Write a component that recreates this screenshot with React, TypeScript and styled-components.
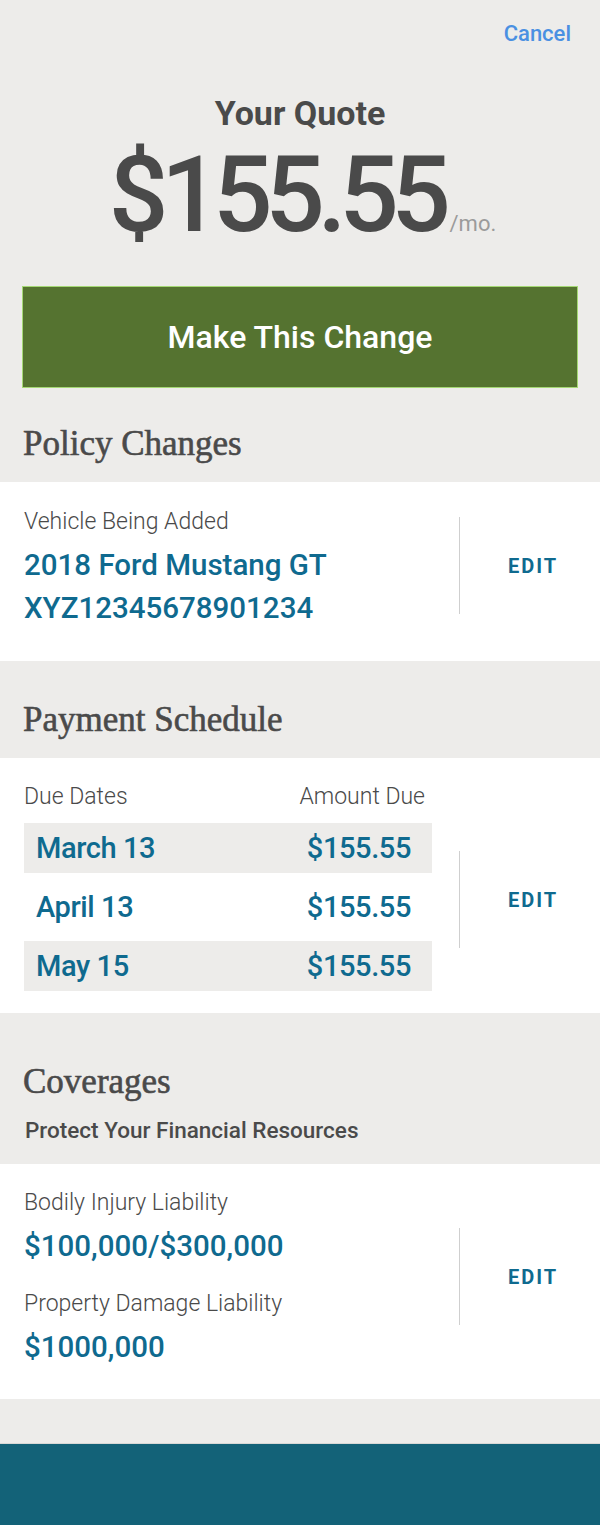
import React from "react";
import styled, { createGlobalStyle } from "styled-components";

const GlobalStyle = createGlobalStyle`
  html, body { margin: 0; padding: 0; background: #edecea; }
  body { font-family: Roboto, "Liberation Sans", sans-serif; color: #4a4a4a; }
  *, *::before, *::after { box-sizing: border-box; }
`;

const TEAL = "#0f6a8f";

const Page = styled.div`
  width: 600px;
  min-height: 1525px;
  display: flex;
  flex-direction: column;
  background: #edecea;
`;

const Header = styled.header`
  display: flex;
  flex-direction: column;
  align-items: center;
  padding: 21px 22px 0;
`;

const CancelLink = styled.a`
  align-self: flex-end;
  margin-right: 7px;
  font-size: 22px;
  line-height: 26px;
  font-weight: 500;
  color: #4a90e2;
  text-decoration: none;
  cursor: pointer;
`;

const Title = styled.h1`
  margin: 46px 0 0;
  font-size: 34px;
  line-height: 40px;
  font-weight: 700;
  color: #4a4a4a;
`;

const PriceRow = styled.div`
  margin-top: 8px;
  padding-left: 5px;
  display: flex;
  align-items: baseline;
  justify-content: center;
  line-height: 110px;
`;

const PriceAmount = styled.span`
  font-size: 105px;
  font-weight: 500;
  letter-spacing: -7.5px;
  color: #4a4a4a;
`;

const PerMonth = styled.span`
  font-size: 22px;
  line-height: 26px;
  color: #9b9b9b;
  margin-left: 6px;
`;

const PrimaryButton = styled.button`
  margin-top: 35px;
  width: 100%;
  height: 102px;
  background: #557330;
  border: 1px solid #a5d874;
  color: #ffffff;
  font-family: Roboto, "Liberation Sans", sans-serif;
  font-size: 32px;
  font-weight: 500;
  cursor: pointer;
`;

const SectionHeader = styled.div<{ $top: number; $bottom: number }>`
  display: flex;
  flex-direction: column;
  padding: ${(p) => p.$top}px 24px ${(p) => p.$bottom}px 23px;
`;

const SectionTitle = styled.h2`
  margin: 0;
  font-family: "Liberation Serif", "DejaVu Serif", serif;
  font-size: 35px;
  line-height: 40px;
  font-weight: 400;
  color: #4a4a4a;
  -webkit-text-stroke: 0.6px #4a4a4a;
`;

const SectionSubtitle = styled.p`
  margin: 14px 0 0 2px;
  font-size: 22.5px;
  line-height: 28px;
  font-weight: 500;
  color: #4a4a4a;
`;

const Card = styled.section<{ $top: number; $bottom: number }>`
  display: flex;
  background: #ffffff;
  padding: ${(p) => p.$top}px 0 ${(p) => p.$bottom}px 24px;
`;

const CardBody = styled.div`
  flex: 1;
  display: flex;
  flex-direction: column;
  padding-right: 27px;
`;

const Label = styled.div<{ $gap?: number }>`
  margin-top: ${(p) => p.$gap ?? 0}px;
  font-size: 23px;
  line-height: 28px;
  font-weight: 300;
  color: #4a4a4a;
`;

const Value = styled.div`
  margin-top: 8px;
  font-size: 29.5px;
  line-height: 43px;
  font-weight: 500;
  color: ${TEAL};
`;

const EditCol = styled.div<{ $offset: number }>`
  flex: 0 0 141px;
  align-self: flex-start;
  margin-top: ${(p) => p.$offset}px;
  height: 97px;
  border-left: 1px solid #cfcfcf;
  display: flex;
  align-items: center;
  justify-content: center;
  padding-left: 6px;
`;

const EditButton = styled.button`
  background: none;
  border: none;
  padding: 0;
  font-family: Roboto, "Liberation Sans", sans-serif;
  font-size: 20px;
  font-weight: 700;
  letter-spacing: 2px;
  color: ${TEAL};
  cursor: pointer;
`;

const ScheduleHead = styled.div`
  display: flex;
  justify-content: space-between;
  padding-right: 7px;
  font-size: 23px;
  line-height: 28px;
  font-weight: 300;
  color: #4a4a4a;
`;

const ScheduleList = styled.div`
  margin-top: 12px;
  display: flex;
  flex-direction: column;
  gap: 9px;
`;

const ScheduleRow = styled.div<{ $shaded: boolean }>`
  height: 50px;
  display: flex;
  align-items: center;
  justify-content: space-between;
  padding: 0 21px 0 12px;
  background: ${(p) => (p.$shaded ? "#edecea" : "transparent")};
  font-size: 29px;
  font-weight: 500;
  letter-spacing: -0.4px;
  color: ${TEAL};
`;

const Spacer = styled.div`
  height: 44px;
`;

const Footer = styled.footer`
  height: 82px;
  background: #136278;
  border-top: 1px solid #d9d8d6;
`;

const payments = [
  { date: "March 13", amount: "$155.55" },
  { date: "April 13", amount: "$155.55" },
  { date: "May 15", amount: "$155.55" },
];

export default function App() {
  return (
    <Page>
      <GlobalStyle />
      <Header>
        <CancelLink>Cancel</CancelLink>
        <Title>Your Quote</Title>
        <PriceRow>
          <PriceAmount>$155.55</PriceAmount>
          <PerMonth>/mo.</PerMonth>
        </PriceRow>
        <PrimaryButton>Make This Change</PrimaryButton>
      </Header>

      <SectionHeader $top={36} $bottom={18}>
        <SectionTitle>Policy Changes</SectionTitle>
      </SectionHeader>
      <Card $top={26} $bottom={31}>
        <CardBody>
          <Label>Vehicle Being Added</Label>
          <Value>
            2018 Ford Mustang GT
            <br />
            XYZ12345678901234
          </Value>
        </CardBody>
        <EditCol $offset={9}>
          <EditButton>EDIT</EditButton>
        </EditCol>
      </Card>

      <SectionHeader $top={39} $bottom={18}>
        <SectionTitle>Payment Schedule</SectionTitle>
      </SectionHeader>
      <Card $top={25} $bottom={22}>
        <CardBody>
          <ScheduleHead>
            <span>Due Dates</span>
            <span>Amount Due</span>
          </ScheduleHead>
          <ScheduleList>
            {payments.map((p, i) => (
              <ScheduleRow key={p.date} $shaded={i % 2 === 0}>
                <span>{p.date}</span>
                <span>{p.amount}</span>
              </ScheduleRow>
            ))}
          </ScheduleList>
        </CardBody>
        <EditCol $offset={68}>
          <EditButton>EDIT</EditButton>
        </EditCol>
      </Card>

      <SectionHeader $top={49} $bottom={20}>
        <SectionTitle>Coverages</SectionTitle>
        <SectionSubtitle>Protect Your Financial Resources</SectionSubtitle>
      </SectionHeader>
      <Card $top={25} $bottom={30}>
        <CardBody>
          <Label>Bodily Injury Liability</Label>
          <Value>$100,000/$300,000</Value>
          <Label $gap={22}>Property Damage Liability</Label>
          <Value>$1000,000</Value>
        </CardBody>
        <EditCol $offset={39}>
          <EditButton>EDIT</EditButton>
        </EditCol>
      </Card>

      <Spacer />
      <Footer />
    </Page>
  );
}
